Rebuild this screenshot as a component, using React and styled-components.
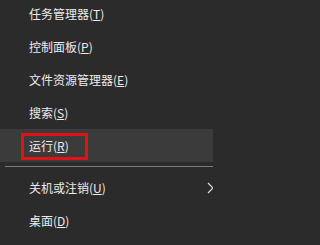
import React from "react";
import styled, { createGlobalStyle } from "styled-components";

const GlobalStyle = createGlobalStyle`
  html, body {
    margin: 0;
    padding: 0;
    background: #2b2b2b;
    overflow: hidden;
  }
`;

const Menu = styled.div`
  width: 213px;
  height: 245px;
  background: #2b2b2b;
  overflow: hidden;
  font-family: "Noto Sans CJK SC", "Noto Sans", sans-serif;
  font-size: 12px;
  color: #ececec;
`;

const List = styled.div`
  display: flex;
  flex-direction: column;
  margin-top: -3px;
`;

const Row = styled.div`
  position: relative;
  height: 33px;
  display: flex;
  align-items: center;
  padding-left: 29px;
  background: ${(p) => (p.$active ? "#3b3b3b" : "transparent")};
`;

const Label = styled.span`
  line-height: 1;
  white-space: nowrap;
`;

const Key = styled.span`
  text-decoration: underline;
  text-underline-offset: 1px;
`;

const Separator = styled.div`
  height: 9px;
  display: flex;
  flex-direction: column;
  justify-content: flex-start;
  padding: 4px 0 0 5px;
  box-sizing: border-box;

  &::after {
    content: "";
    display: block;
    height: 1px;
    background: #7a7a7a;
  }
`;

const Highlight = styled.div`
  position: absolute;
  left: 21px;
  top: 4px;
  width: 67px;
  height: 27px;
  box-sizing: border-box;
  border: 3px solid #e3101a;
`;

const Chevron = styled.svg`
  position: absolute;
  right: -3px;
  top: 11px;
`;

const items = [
  { text: "任务管理器", key: "T" },
  { text: "控制面板", key: "P" },
  { text: "文件资源管理器", key: "E" },
  { text: "搜索", key: "S" },
  { text: "运行", key: "R", active: true },
  { separator: true },
  { text: "关机或注销", key: "U", submenu: true },
  { text: "桌面", key: "D" },
];

const App = () => {
  return (
    <Menu>
      <GlobalStyle />
      <List>
        {items.map((item, i) =>
          item.separator ? (
            <Separator key={i} />
          ) : (
            <Row key={i} $active={item.active}>
              <Label>
                {item.text}(<Key>{item.key}</Key>)
              </Label>
              {item.active && <Highlight />}
              {item.submenu && (
                <Chevron width="10" height="12" viewBox="0 0 10 12">
                  <polyline
                    points="2,1 7,6 2,11"
                    fill="none"
                    stroke="#e0e0e0"
                    strokeWidth="1.2"
                  />
                </Chevron>
              )}
            </Row>
          )
        )}
      </List>
    </Menu>
  );
};

export default App;
